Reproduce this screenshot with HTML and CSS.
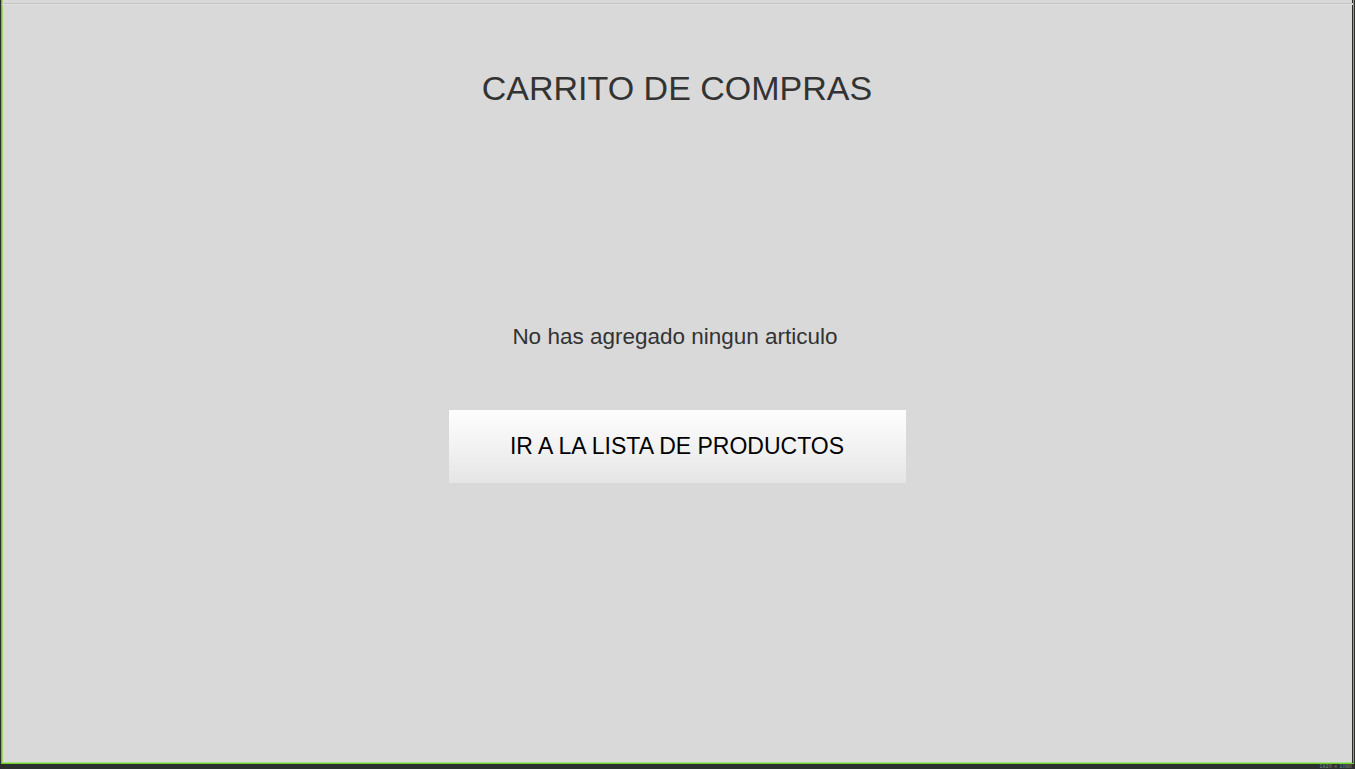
FILE: index.html
```html
<!DOCTYPE html>
<html lang="es">
<head>
<meta charset="utf-8">
<title>Carrito de compras</title>
<link rel="stylesheet" href="styles.css">
</head>
<body>
<div class="screen">
  <div class="topline"></div>
  <main class="cart">
    <h1 class="cart-title">CARRITO DE COMPRAS</h1>
    <p class="cart-empty">No has agregado ningun articulo</p>
    <button class="cart-button" type="button">IR A LA LISTA DE PRODUCTOS</button>
  </main>
</div>
<div class="statusbar"><span class="resolution">1920 × 1080</span></div>
</body>
</html>
```

FILE: styles.css
```css
html, body {
  margin: 0;
  padding: 0;
}

body {
  width: 1355px;
  height: 769px;
  overflow: hidden;
  background: #2d2f2e;
  font-family: "Liberation Sans", Arial, sans-serif;
}

.screen {
  box-sizing: border-box;
  margin-left: 1px;
  width: 1353px;
  height: 764px;
  background: #d9d9d9;
  border-left: 1px solid #5ccc14;
  border-right: 1px solid #5ccc14;
  border-bottom: 1px solid #6fd02e;
  box-shadow: inset 1px 0 0 #9ed86f, inset -1px 0 0 #2d2f2e, inset 0 -1px 0 #a9dc87;
  display: flex;
  flex-direction: column;
}

.topline {
  height: 3px;
  border-bottom: 1px solid #c4c4c4;
  box-shadow: 0 1px 0 #dfdfdf;
}

.cart {
  display: flex;
  flex-direction: column;
  align-items: center;
  padding-right: 1px;
}

.cart-title {
  margin: 64px 0 0;
  font-size: 34px;
  line-height: 40px;
  font-weight: normal;
  color: #333333;
}

.cart-empty {
  margin: 215px 0 0;
  padding-right: 4px;
  font-size: 22.5px;
  line-height: 28px;
  color: #333333;
}

.cart-button {
  margin-top: 59px;
  width: 457px;
  height: 73px;
  border: none;
  padding: 0;
  background: linear-gradient(to bottom, #fefefe 0%, #f2f2f2 50%, #e5e5e5 100%);
  font-family: "Liberation Sans", Arial, sans-serif;
  font-size: 23px;
  color: #000000;
  cursor: pointer;
}

.statusbar {
  height: 5px;
  display: flex;
  justify-content: flex-end;
  align-items: flex-end;
  overflow: hidden;
}

.resolution {
  font-family: "DejaVu Sans", sans-serif;
  font-size: 5px;
  line-height: 5px;
  margin-right: 3px;
  color: #8a8a8a;
}
```
